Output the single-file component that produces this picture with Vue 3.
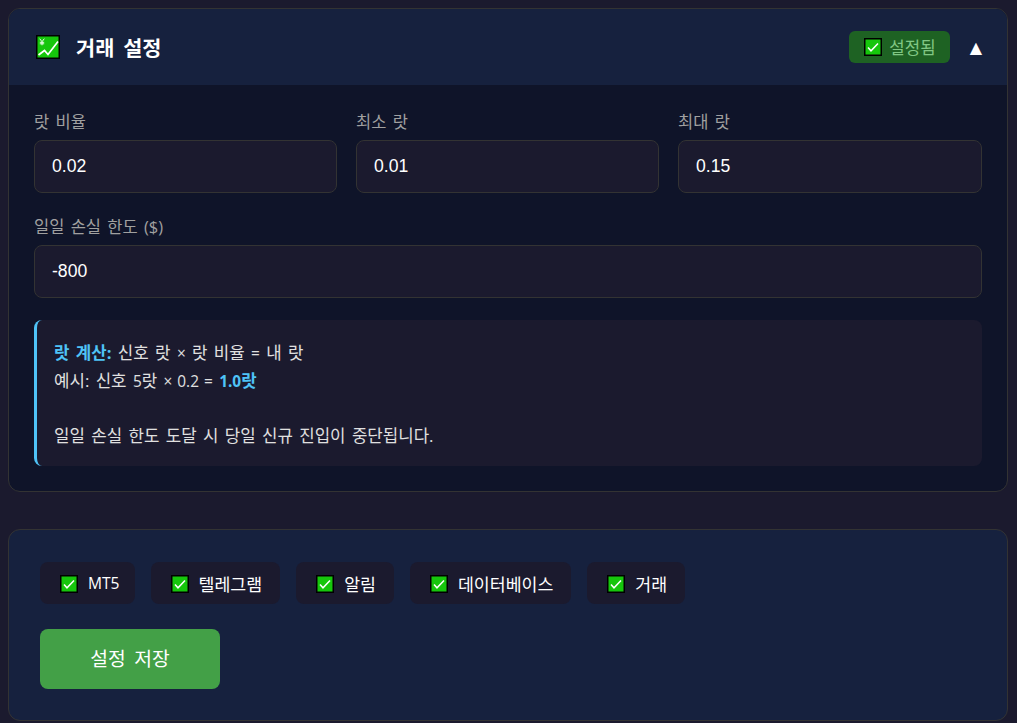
<script setup>
import { ref } from "vue"

const isOpen = ref(true)
const lotRatio = ref("0.02")
const minLot = ref("0.01")
const maxLot = ref("0.15")
const dailyLimit = ref("-800")

// 상태 표시
const services = ["MT5", "텔레그램", "알림", "데이터베이스", "거래"]
</script>

<template>
  <div class="page">
    <section class="card">
      <header class="card-head" @click="isOpen = !isOpen">
        <div class="title">
          <svg class="chart-icon" viewBox="0 0 24 24">
            <rect x="0.750" y="0.750" width="22.500" height="22.500" fill="#16c60c" stroke="#000" stroke-width="1.500" />
            <path d="M2.500 20l6-4.500 3.500 4L22 6.500" fill="none" stroke="#fff" stroke-width="1.700" />
            <path d="M3.700 3.700l2.300 3 2.300-3M6 6.700v3.600M3.800 7.300h4.400M3.800 8.800h4.400" fill="none" stroke="#fff" stroke-width="0.900" />
          </svg>
          <h2>거래 설정</h2>
        </div>
        <div class="head-right">
          <span class="badge">
            <svg class="check" viewBox="0 0 18 18">
              <rect x="0.750" y="0.750" width="16.500" height="16.500" fill="#16c60c" stroke="#000" stroke-width="1.500" />
              <path d="M4 9.500l3 3.300 7-7.300" fill="none" stroke="#fff" stroke-width="1.500" />
            </svg>
            설정됨
          </span>
          <span class="arrow">▲</span>
        </div>
      </header>

      <div v-if="isOpen" class="card-body">
        <div class="row-3">
          <label class="field">
            <span>랏 비율</span>
            <input v-model="lotRatio" type="text" />
          </label>
          <label class="field">
            <span>최소 랏</span>
            <input v-model="minLot" type="text" />
          </label>
          <label class="field">
            <span>최대 랏</span>
            <input v-model="maxLot" type="text" />
          </label>
        </div>
        <label class="field">
          <span>일일 손실 한도 ($)</span>
          <input v-model="dailyLimit" type="text" />
        </label>
        <div class="info">
          <strong>랏 계산:</strong> 신호 랏 <span class="sym">×</span> 랏 비율 <span class="sym">=</span> 내 랏<br />
          예시: 신호 <span class="sym">5</span>랏 <span class="sym">× 0.2 =</span> <strong><span class="sym">1.0</span>랏</strong><br />
          <br />
          일일 손실 한도 도달 시 당일 신규 진입이 중단됩니다.
        </div>
      </div>
    </section>

    <section class="status-card">
      <div class="chips">
        <div v-for="name in services" :key="name" class="chip" :class="{ latin: name === 'MT5' }">
          <svg class="check" viewBox="0 0 18 18">
            <rect x="0.750" y="0.750" width="16.500" height="16.500" fill="#16c60c" stroke="#000" stroke-width="1.500" />
            <path d="M4 9.500l3 3.300 7-7.300" fill="none" stroke="#fff" stroke-width="1.500" />
          </svg>
          {{ name }}
        </div>
      </div>
      <button class="save-btn">설정 저장</button>
    </section>
  </div>
</template>

<style>
body {
  background: #1b1a2e;
}
</style>

<style scoped>
.page {
  padding: 8px 9px 2px 8px;
  font-family: "Open Sans", "Noto Sans CJK KR", sans-serif;
  color: #fff;
}

.card {
  background: #0f1429;
  border: 1px solid #333;
  border-radius: 12px;
  overflow: hidden;
}

.card-head {
  display: flex;
  align-items: center;
  justify-content: space-between;
  height: 76px;
  padding: 0 25px 0 27px;
  background: #16213e;
  cursor: pointer;
}

.title {
  display: flex;
  align-items: center;
  gap: 16px;
}

.chart-icon {
  width: 24px;
  height: 24px;
}

h2 {
  margin: 0;
  font-size: 20.800px;
  font-weight: 700;
  word-spacing: 3.500px;
}

.head-right {
  display: flex;
  align-items: center;
  gap: 20px;
}

.badge {
  display: flex;
  align-items: center;
  gap: 7px;
  height: 32px;
  padding: 0 14px 0 15px;
  border-radius: 6px;
  background: #1e6223;
  color: #81c784;
  font-size: 16.800px;
}

.check {
  width: 18px;
  height: 18px;
  flex: none;
}

.arrow {
  font-size: 16px;
  font-family: "DejaVu Sans", sans-serif;
}

.card-body {
  padding: 25px;
}

.row-3 {
  display: grid;
  grid-template-columns: 303px 303px 1fr;
  gap: 19px;
  margin-bottom: 22px;
}

.field {
  display: block;
}

.field span {
  display: block;
  margin-bottom: 6px;
  font-size: 16.500px;
  word-spacing: 2px;
  line-height: 24px;
  color: #a0a0a0;
}

.field input {
  display: block;
  box-sizing: border-box;
  width: 100%;
  height: 53px;
  padding: 0 17px;
  background: #1b1a2e;
  border: 1px solid #333;
  border-radius: 8px;
  color: #fff;
  font-family: "Liberation Sans", sans-serif;
  font-size: 17.600px;
  outline: none;
}

.info {
  margin-top: 22px;
  padding: 19px 17px 17px;
  background: #1b1a2e;
  border-left: 3px solid #4fc3f7;
  border-radius: 8px;
  font-size: 16.800px;
  word-spacing: 2px;
  line-height: 27.500px;
  color: #e0e0e0;
}

.info strong {
  color: #4fc3f7;
}

.sym {
  font-size: 15.400px;
  word-spacing: 1px;
  line-height: 1;
}

.status-card {
  margin-top: 37px;
  padding: 32px 31px 31px;
  background: #16213e;
  border: 1px solid #333;
  border-radius: 12px;
}

.chips {
  display: flex;
  gap: 16px;
  margin-bottom: 25px;
}

.chip {
  display: flex;
  align-items: center;
  gap: 10px;
  height: 42px;
  padding: 0 18px 0 20px;
  background: #1b1a2e;
  border-radius: 8px;
  font-size: 17.300px;
}

.chip .check {
  margin-top: 2px;
}

.chip.latin {
  padding-right: 15px;
  font-size: 15.600px;
}

.save-btn {
  display: block;
  width: 180px;
  height: 60px;
  padding: 0 0 3px;
  border: none;
  border-radius: 8px;
  background: #43a047;
  color: #fff;
  font-family: inherit;
  font-size: 19.300px;
  word-spacing: 3.700px;
  cursor: pointer;
}
</style>
